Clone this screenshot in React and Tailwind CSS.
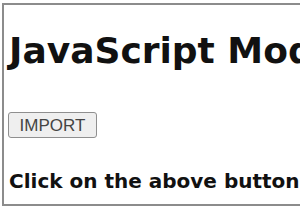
export default function App() {
  return (
    <div className="w-[300px] h-[210px] overflow-hidden bg-white pl-[2px] pt-[3px]">
      <div className="w-[340px] h-[203px] border-2 border-r-0 border-[#8c8c8c] bg-white pl-[5px] text-[#111]" style={{ fontFamily: '"DejaVu Sans", Verdana, sans-serif' }}>
        <h1 className="mt-[25px] text-[36px] leading-[42px] font-bold whitespace-nowrap">JavaScript Modules</h1>
        <button className="mt-[40px] ml-[-1px] w-[89px] h-[26px] bg-[#efefef] border border-[#8f8f8f] rounded-[3px] text-[17px] text-[#444] leading-none" style={{ fontFamily: '"Liberation Sans", Arial, sans-serif' }}>IMPORT</button>
        <div className="mt-[31px] text-[20px] leading-[24px] font-bold whitespace-nowrap">Click on the above button</div>
      </div>
    </div>
  );
}
